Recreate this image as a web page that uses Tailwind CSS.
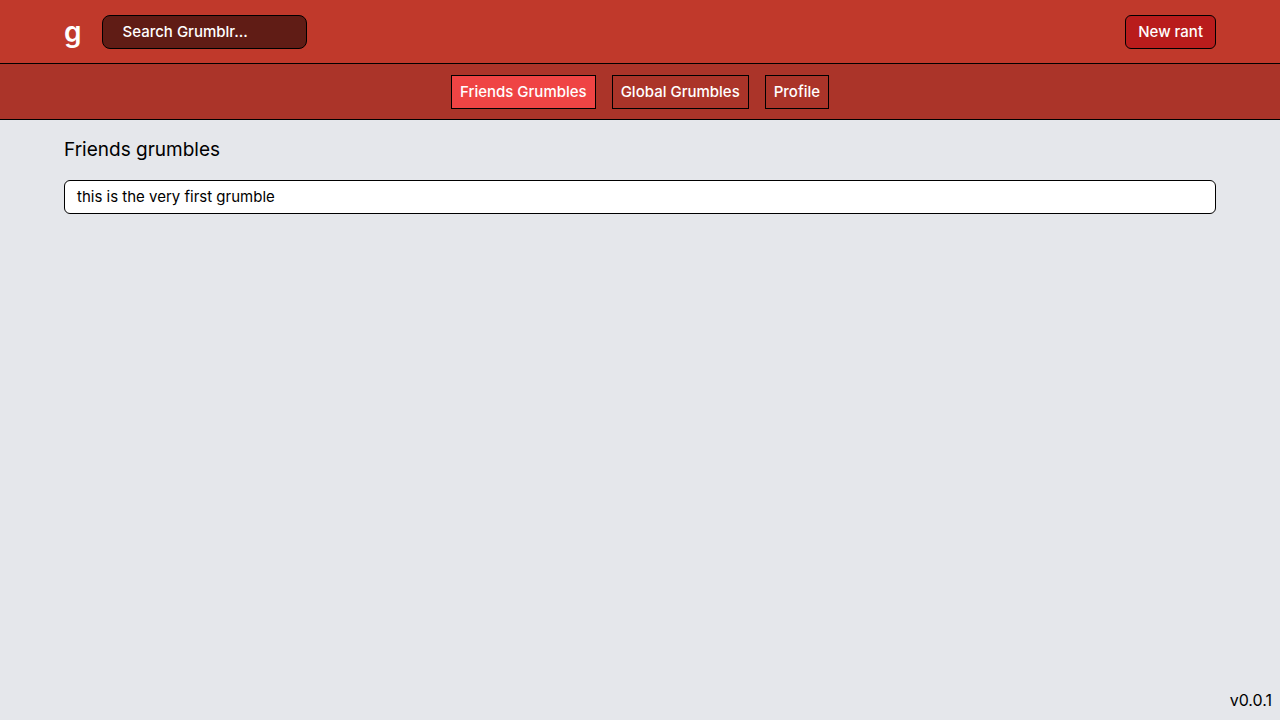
<!DOCTYPE html>
<html lang="en">
<head>
<meta charset="utf-8">
<meta name="viewport" content="width=device-width, initial-scale=1">
<title>Grumblr</title>
<script src="https://cdn.jsdelivr.net/npm/@tailwindcss/browser@4"></script>
</head>
<body class="flex min-h-screen flex-col bg-[#e5e7eb] font-['Inter',sans-serif] text-[15px] leading-6 text-black">
  <header class="flex h-16 items-center justify-between border-b border-black bg-[#c0392b] px-16 text-white">
    <div class="flex items-center gap-5">
      <a href="#" class="text-[28px] leading-9 font-semibold">g</a>
      <input type="search" aria-label="Search Grumblr" placeholder="Search Grumblr..." class="h-[34px] w-[205px] rounded-lg border border-black bg-[#601c15] px-5 font-medium placeholder:text-white">
    </div>
    <button type="button" class="h-[34px] rounded-md border border-black bg-[#b91c1c] px-3 font-medium">New rant</button>
  </header>
  <nav class="flex h-14 items-center justify-center gap-4 border-b border-black bg-[#ab3429] font-medium text-white">
    <a href="#" aria-current="page" class="border border-black bg-[#ef4444] px-2 py-1">Friends Grumbles</a>
    <a href="#" class="border border-black px-2 py-1">Global Grumbles</a>
    <a href="#" class="border border-black px-2 py-1">Profile</a>
  </nav>
  <main class="flex-1 px-16 py-4">
    <h1 class="mb-4 text-[19px] leading-7">Friends grumbles</h1>
    <article class="rounded-md border border-black bg-white px-3 py-1">this is the very first grumble</article>
  </main>
  <footer class="p-2 text-right text-base">v0.0.1</footer>
</body>
</html>
